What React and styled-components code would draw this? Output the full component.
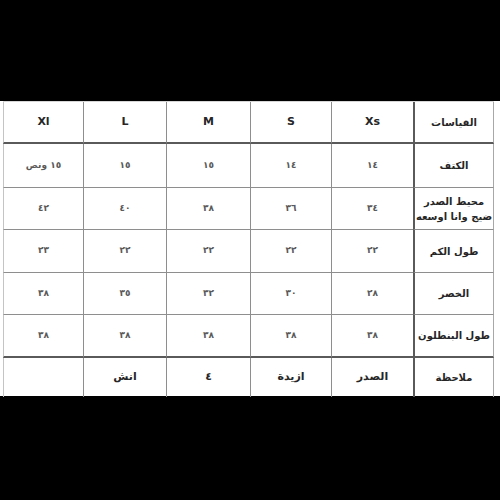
import React from "react";
import styled, { createGlobalStyle } from "styled-components";

const GlobalStyle = createGlobalStyle`
  html, body {
    margin: 0;
    padding: 0;
    background: #000;
    height: 500px;
    overflow: hidden;
  }
`;

const sizes = ["Xs", "S", "M", "L", "Xl"];

const rows = [
  { label: ["الكتف"], values: ["١٤", "١٤", "١٥", "١٥", "١٥ ونص"] },
  { label: ["محيط الصدر", "ضيج وانا اوسعه"], values: ["٣٤", "٣٦", "٣٨", "٤٠", "٤٢"] },
  { label: ["طول الكم"], values: ["٢٢", "٢٢", "٢٢", "٢٢", "٢٣"] },
  { label: ["الخصر"], values: ["٢٨", "٣٠", "٣٢", "٣٥", "٣٨"] },
  { label: ["طول البنطلون"], values: ["٣٨", "٣٨", "٣٨", "٣٨", "٣٨"] }
];

const notes = ["الصدر", "ازيدة", "٤", "انش", ""];

const Sheet = styled.div`
  margin-top: 101px;
  height: 295px;
  background: #fff;
  padding-left: 3px;
  box-sizing: border-box;
`;

const Grid = styled.div`
  direction: rtl;
  display: grid;
  width: 491px;
  grid-template-columns: 81px 82px 81px 84px 83px 80px;
  grid-template-rows: 42px 44px 42px 43px 42px 43px 39px;
  border-top: 1px solid #d6d6d6;
  box-sizing: border-box;
  font-family: "DejaVu Sans", "Liberation Sans", sans-serif;
`;

const Cell = styled.div`
  box-sizing: border-box;
  display: flex;
  flex-direction: column;
  align-items: center;
  justify-content: center;
  text-align: center;
  border-bottom: ${(p) => (p.$thickBottom ? "2px solid #5a5a5a" : p.$last ? "none" : "1px solid #8e8e8e")};
  border-left: ${(p) => (p.$label ? "2px solid #5a5a5a" : p.$edge ? "1px solid #c4c4c4" : "1px solid #8e8e8e")};
  border-right: ${(p) => (p.$label ? "1px solid #a8a8a8" : "none")};
  color: ${(p) => (p.$strong ? "#262626" : "#5a5a5a")};
  font-size: ${(p) => (p.$label ? "10px" : p.$strong ? "11px" : "9px")};
  font-weight: 700;
  line-height: 1.5;
  white-space: nowrap;
`;

export default function App() {
  const thickAfter = (i) => i === 0 || i === rows.length;
  return (
    <>
      <GlobalStyle />
      <Sheet>
        <Grid>
          <Cell $label $strong $thickBottom>القياسات</Cell>
          {sizes.map((s, i) => (
            <Cell key={s} $strong $thickBottom $edge={i === sizes.length - 1}>{s}</Cell>
          ))}
          {rows.map((r, ri) => (
            <React.Fragment key={ri}>
              <Cell $label $strong $thickBottom={thickAfter(ri + 1)}>
                {r.label.map((l) => <span key={l}>{l}</span>)}
              </Cell>
              {r.values.map((v, i) => (
                <Cell key={i} $thickBottom={thickAfter(ri + 1)} $edge={i === r.values.length - 1}>{v}</Cell>
              ))}
            </React.Fragment>
          ))}
          <Cell $label $strong $last>ملاحظة</Cell>
          {notes.map((n, i) => (
            <Cell key={i} $strong $last $edge={i === notes.length - 1}>{n}</Cell>
          ))}
        </Grid>
      </Sheet>
    </>
  );
}
